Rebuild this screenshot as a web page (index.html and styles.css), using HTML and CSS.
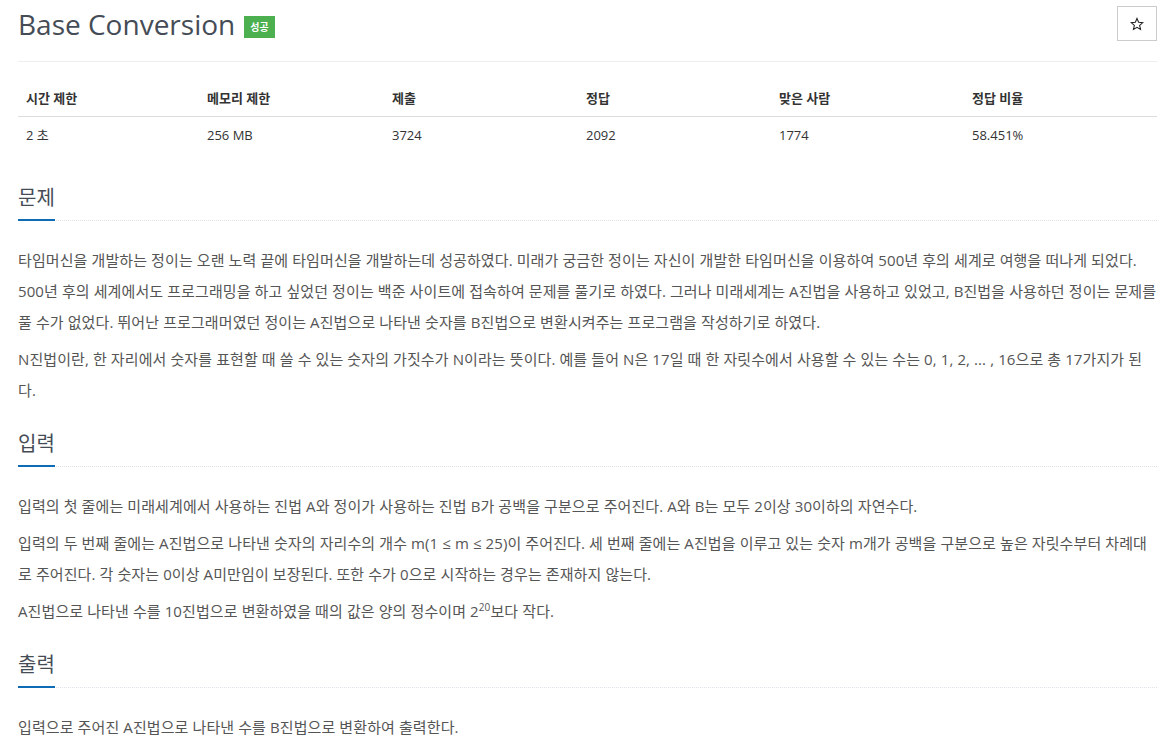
FILE: index.html
```html
<!DOCTYPE html>
<html lang="ko">
<head>
<meta charset="utf-8">
<title>Base Conversion</title>
<link rel="stylesheet" href="styles.css">
</head>
<body>
<div class="page">
  <div class="page-header">
    <h1 class="title"><span class="title-text">Base Conversion</span><span class="badge">성공</span></h1>
    <button class="star-btn" type="button" aria-label="즐겨찾기"><svg width="14" height="14" viewBox="0 0 24 24"><path d="M12 2.5l2.8 6.6 7.1.6-5.4 4.7 1.6 7-6.1-3.7-6.1 3.7 1.6-7-5.4-4.7 7.1-.6z" fill="none" stroke="#222" stroke-width="1.8" stroke-linejoin="miter"/></svg></button>
  </div>

  <table class="info">
    <colgroup>
      <col class="c1"><col class="c2"><col class="c3"><col class="c4"><col class="c5"><col class="c6">
    </colgroup>
    <thead>
      <tr><th>시간 제한</th><th>메모리 제한</th><th>제출</th><th>정답</th><th>맞은 사람</th><th>정답 비율</th></tr>
    </thead>
    <tbody>
      <tr><td>2 초</td><td>256 MB</td><td>3724</td><td>2092</td><td>1774</td><td>58.451%</td></tr>
    </tbody>
  </table>

  <section class="section">
    <div class="headline"><h2>문제</h2></div>
    <p>타임머신을 개발하는 정이는 오랜 노력 끝에 타임머신을 개발하는데 성공하였다. 미래가 궁금한 정이는 자신이 개발한 타임머신을 이용하여 500년 후의 세계로 여행을 떠나게 되었다. 500년 후의 세계에서도 프로그래밍을 하고 싶었던 정이는 백준 사이트에 접속하여 문제를 풀기로 하였다. 그러나 미래세계는 A진법을 사용하고 있었고, B진법을 사용하던 정이는 문제를 풀 수가 없었다. 뛰어난 프로그래머였던 정이는 A진법으로 나타낸 숫자를 B진법으로 변환시켜주는 프로그램을 작성하기로 하였다.</p>
    <p>N진법이란, 한 자리에서 숫자를 표현할 때 쓸 수 있는 숫자의 가짓수가 N이라는 뜻이다. 예를 들어 N은 17일 때 한 자릿수에서 사용할 수 있는 수는 0, 1, 2, ... , 16으로 총 17가지가 된다.</p>
  </section>

  <section class="section">
    <div class="headline"><h2>입력</h2></div>
    <p>입력의 첫 줄에는 미래세계에서 사용하는 진법 A와 정이가 사용하는 진법 B가 공백을 구분으로 주어진다. A와 B는 모두 2이상 30이하의 자연수다.</p>
    <p>입력의 두 번째 줄에는 A진법으로 나타낸 숫자의 자리수의 개수 m(1 ≤ m ≤ 25)이 주어진다. 세 번째 줄에는 A진법을 이루고 있는 숫자 m개가 공백을 구분으로 높은 자릿수부터 차례대로 주어진다. 각 숫자는 0이상 A미만임이 보장된다. 또한 수가 0으로 시작하는 경우는 존재하지 않는다.</p>
    <p>A진법으로 나타낸 수를 10진법으로 변환하였을 때의 값은 양의 정수이며 2<sup>20</sup>보다 작다.</p>
  </section>

  <section class="section">
    <div class="headline"><h2>출력</h2></div>
    <p>입력으로 주어진 A진법으로 나타낸 수를 B진법으로 변환하여 출력한다.</p>
  </section>
</div>
</body>
</html>
```

FILE: styles.css
```css
html, body {
  margin: 0;
  padding: 0;
  background: #fff;
}

body {
  font-family: "Open Sans", "Noto Sans CJK KR", sans-serif;
  color: #555;
  font-size: 14px;
}

.page {
  padding: 0 5px 0 18px;
}

.page-header {
  display: flex;
  justify-content: space-between;
  align-items: flex-start;
  border-bottom: 1px solid #eee;
  height: 61px;
}

.title {
  margin: 0;
  padding-top: 4px;
  font-weight: 400;
  font-size: 28px;
  line-height: 40px;
  color: #454c56;
  display: flex;
  align-items: center;
}

.badge {
  display: inline-block;
  margin-left: 9px;
  margin-top: 6px;
  background: #4caf50;
  color: #fff;
  font-size: 10px;
  font-weight: 700;
  line-height: 22px;
  height: 22px;
  padding: 0 6px;
}

.star-btn {
  margin-top: 6px;
  width: 40px;
  height: 35px;
  border: 1px solid #ccc;
  border-radius: 0;
  background: #fff;
  padding: 0;
  display: flex;
  align-items: center;
  justify-content: center;
}

.info {
  width: 100%;
  border-collapse: collapse;
  table-layout: fixed;
  margin-top: 18px;
  font-size: 13px;
  color: #333;
}

.info .c1 { width: 181px; }
.info .c2 { width: 185px; }
.info .c3 { width: 194px; }
.info .c4 { width: 193px; }
.info .c5 { width: 193px; }

.info th,
.info td {
  text-align: left;
  padding: 8px 8px;
  line-height: 20px;
}

.info th {
  font-weight: 700;
  border-bottom: 1px solid #ddd;
}

.section {
  margin-top: 30px;
}

.section + .section {
  margin-top: 23px;
}

.headline {
  border-bottom: 1px dotted #dfe3e8;
  margin-bottom: 24px;
}

.headline h2 {
  display: inline-block;
  margin: 0 0 -1px 0;
  font-size: 20px;
  font-weight: 400;
  line-height: 30px;
  padding-bottom: 6px;
  color: #454c56;
  border-bottom: 2px solid #0e6bb5;
}

.section p {
  margin: 0 0 6px 0;
  line-height: 31px;
  font-size: 15px;
  letter-spacing: 0.1px;
  color: #555;
}

.section p:last-child {
  margin-bottom: 0;
}

.section sup {
  font-size: 10px;
  line-height: 0;
  vertical-align: 6px;
}
```
